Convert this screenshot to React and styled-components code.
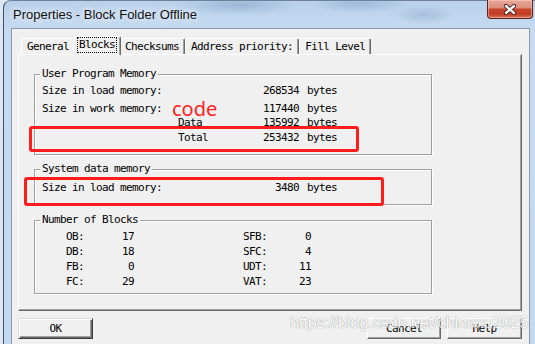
import styled, { createGlobalStyle } from 'styled-components';

const GlobalStyle = createGlobalStyle`
  html, body {
    margin: 0;
    padding: 0;
    overflow: hidden;
  }
  body {
    width: 535px;
    height: 344px;
    background: #dce7f3;
    font-family: "DejaVu Sans Mono", "Liberation Mono", monospace;
    color: #000;
  }
`;

const Page = styled.div`
  position: relative;
  width: 535px;
  height: 344px;
  overflow: hidden;
`;

const Window = styled.div`
  margin-left: 3px;
  width: 545px;
  height: 360px;
  box-sizing: border-box;
  border-left: 1px solid #3f4f61;
  border-top: 1px solid #6f8299;
  border-top-left-radius: 8px;
  padding-left: 7px;
  display: flex;
  flex-direction: column;
  background:
    radial-gradient(ellipse 60px 10px at 235px 4px, rgba(120, 150, 185, 0.45), transparent),
    radial-gradient(ellipse 50px 9px at 355px 3px, rgba(120, 150, 185, 0.4), transparent),
    radial-gradient(ellipse 30px 10px at 420px 14px, rgba(120, 150, 185, 0.35), transparent),
    linear-gradient(to bottom, #b9d1eb 0%, #c6dbf1 30px, #c3d9f0 100%);
`;

const TitleBar = styled.div`
  height: 27px;
  display: flex;
  align-items: flex-start;
  margin-left: -7px;
  padding-left: 9px;
`;

const TitleText = styled.span`
  font-family: "Liberation Sans", Arial, sans-serif;
  font-size: 13px;
  line-height: 27px;
  color: #111;
  text-shadow: 0 0 6px rgba(255, 255, 255, 0.9), 0 0 10px rgba(255, 255, 255, 0.7);
`;

const CloseButton = styled.div`
  margin-left: auto;
  margin-right: 15px;
  margin-top: -1px;
  width: 46px;
  height: 19px;
  box-sizing: border-box;
  border: 1px solid #5e2219;
  border-top: none;
  border-radius: 0 0 4px 4px;
  background: linear-gradient(
    to bottom,
    #e9a899 0%,
    #dc8e7d 42%,
    #c7452d 52%,
    #c23c24 78%,
    #d8735c 100%
  );
  box-shadow: inset 0 0 0 1px rgba(255, 220, 210, 0.45);
  display: flex;
  align-items: center;
  justify-content: center;
`;

const Client = styled.div`
  width: 519px;
  flex: 1;
  box-sizing: border-box;
  border: 1px solid #8a9aae;
  background: #f0f0f0;
  padding: 7px 7px 0 6px;
`;

const TabStrip = styled.div`
  display: flex;
  align-items: flex-end;
  height: 18px;
  padding-left: 3px;
  position: relative;
  z-index: 1;
`;

const Tab = styled.div`
  height: ${({ $active }) => ($active ? '19px' : '16px')};
  margin: ${({ $active }) => ($active ? '0 -2px -1px' : '0')};
  padding: 0 4px;
  box-sizing: border-box;
  border: 1px solid;
  border-color: #fff #696969 transparent #fff;
  border-bottom: none;
  border-radius: 2px 2px 0 0;
  box-shadow: inset -1px 0 0 #a0a0a0;
  background: #f0f0f0;
  position: relative;
  z-index: ${({ $active }) => ($active ? 2 : 1)};
  display: flex;
  align-items: ${({ $active }) => ($active ? 'flex-start' : 'center')};
  padding-top: ${({ $active }) => ($active ? '1px' : '0')};
  font-size: 11px;
  letter-spacing: -0.62px;
  white-space: nowrap;
`;

const TabLabel = styled.span`
  line-height: 14px;
  padding: 0 1px;
  outline: ${({ $focus }) => ($focus ? '1px dotted #000' : 'none')};
`;

const Panel = styled.div`
  height: 257px;
  box-sizing: border-box;
  border: 1px solid;
  border-color: #fff #696969 #696969 #fff;
  box-shadow: inset -1px -1px 0 #a0a0a0;
  padding: 19px 0 0 15px;
`;

const GroupBox = styled.div`
  position: relative;
  width: 398px;
  box-sizing: border-box;
  margin-top: ${({ $mt }) => $mt}px;
  padding: ${({ $pt }) => $pt}px 0 ${({ $pb }) => $pb}px 7px;
  border: 1px solid #a0a0a0;
  box-shadow: inset 1px 1px 0 #fff, 1px 1px 0 #fff;
  font-size: 11px;
  letter-spacing: -0.62px;
`;

const Legend = styled.span`
  position: absolute;
  top: -7px;
  left: 5px;
  padding: 0 2px;
  line-height: 12px;
  background: #f0f0f0;
  white-space: nowrap;
`;

const MemRow = styled.div`
  display: grid;
  grid-template-columns: 136px 60px 61px auto;
  height: 14px;
  line-height: 14px;
  margin-top: ${({ $mt }) => $mt || 0}px;
  white-space: nowrap;
`;

const Value = styled.span`
  text-align: right;
`;

const Unit = styled.span`
  padding-left: 8px;
`;

const BlockRow = styled.div`
  display: grid;
  grid-template-columns: 48px 20px 109px 48px 20px;
  padding-left: 24px;
  height: 14px;
  line-height: 14px;
  margin-top: ${({ $mt }) => $mt || 0}px;
  white-space: nowrap;
`;

const ButtonRow = styled.div`
  display: flex;
  justify-content: space-between;
  margin-top: 7px;
`;

const ButtonGroup = styled.div`
  display: flex;
  gap: 6px;
`;

const Button = styled.div`
  width: ${({ $w }) => $w}px;
  height: 21px;
  box-sizing: border-box;
  border: 1px solid;
  border-color: ${({ $default }) =>
    $default ? '#dcdcdc #3c3c3c #3c3c3c #dcdcdc' : '#fff #696969 #696969 #fff'};
  box-shadow: ${({ $default }) =>
    $default
      ? 'inset 1px 1px 0 #fff, inset -1px -1px 0 #696969, inset -2px -2px 0 #a0a0a0'
      : 'inset -1px -1px 0 #a0a0a0'};
  background: #f0f0f0;
  display: flex;
  align-items: center;
  justify-content: center;
  font-size: 11px;
  letter-spacing: -0.62px;
`;

const RedBox = styled.div`
  position: absolute;
  left: ${({ $x }) => $x}px;
  top: ${({ $y }) => $y}px;
  width: ${({ $w }) => $w}px;
  height: ${({ $h }) => $h}px;
  box-sizing: border-box;
  border: 3px solid #ff1c1c;
  border-radius: 3px;
  pointer-events: none;
`;

const CodeNote = styled.span`
  position: absolute;
  left: 172px;
  top: 99px;
  font-family: "Noto Sans", "Liberation Sans", sans-serif;
  font-size: 20px;
  line-height: 20px;
  color: #ff2323;
`;

const Watermark = styled.span`
  position: absolute;
  left: 290px;
  top: 315px;
  font-family: "Liberation Sans", Arial, sans-serif;
  font-size: 16px;
  line-height: 16px;
  color: #ffffff;
  opacity: 0.75;
  text-shadow: 0 0 1px #8c8c8c, 0 0 1px #8c8c8c;
  white-space: nowrap;
  pointer-events: none;
`;

const tabs = ['General', 'Blocks', 'Checksums', 'Address priority:', 'Fill Level'];

const memory = [
  { label: 'Size in load memory:', value: '268534', mt: 0 },
  { label: 'Size in work memory:', value: '117440', mt: 4 },
  { sub: 'Data', value: '135992', mt: 0 },
  { sub: 'Total', value: '253432', mt: 1 },
];

const blocks = [
  ['OB:', '17', 'SFB:', '0'],
  ['DB:', '18', 'SFC:', '4'],
  ['FB:', '0', 'UDT:', '11'],
  ['FC:', '29', 'VAT:', '23'],
];

function CloseGlyph() {
  return (
    <svg width="14" height="11" viewBox="0 0 14 11">
      <path d="M3 2 L11 9 M11 2 L3 9" stroke="#3a1510" strokeWidth="4.2" strokeLinecap="round" />
      <path d="M3 2 L11 9 M11 2 L3 9" stroke="#fff" strokeWidth="2.4" strokeLinecap="round" />
    </svg>
  );
}

export default function App() {
  return (
    <Page>
      <GlobalStyle />
      <Window>
        <TitleBar>
          <TitleText>Properties - Block Folder Offline</TitleText>
          <CloseButton>
            <CloseGlyph />
          </CloseButton>
        </TitleBar>
        <Client>
          <TabStrip>
            {tabs.map((t) => (
              <Tab key={t} $active={t === 'Blocks'}>
                <TabLabel $focus={t === 'Blocks'}>{t}</TabLabel>
              </Tab>
            ))}
          </TabStrip>
          <Panel>
            <GroupBox $mt={0} $pt={9} $pb={9}>
              <Legend>User Program Memory</Legend>
              {memory.map((m) => (
                <MemRow key={m.value} $mt={m.mt}>
                  <span>{m.label || ''}</span>
                  <span>{m.sub || ''}</span>
                  <Value>{m.value}</Value>
                  <Unit>bytes</Unit>
                </MemRow>
              ))}
            </GroupBox>
            <GroupBox $mt={14} $pt={11} $pb={9}>
              <Legend>System data memory</Legend>
              <MemRow>
                <span>Size in load memory:</span>
                <span />
                <Value>3480</Value>
                <Unit>bytes</Unit>
              </MemRow>
            </GroupBox>
            <GroupBox $mt={15} $pt={9} $pb={4}>
              <Legend>Number of Blocks</Legend>
              {blocks.map((b, i) => (
                <BlockRow key={b[0]} $mt={i === 0 ? 0 : 1}>
                  <span>{b[0]}</span>
                  <Value>{b[1]}</Value>
                  <span />
                  <span>{b[2]}</span>
                  <Value>{b[3]}</Value>
                </BlockRow>
              ))}
            </GroupBox>
          </Panel>
          <ButtonRow>
            <Button $w={75} $default>OK</Button>
            <ButtonGroup>
              <Button $w={74}>Cancel</Button>
              <Button $w={75}>Help</Button>
            </ButtonGroup>
          </ButtonRow>
        </Client>
      </Window>
      <CodeNote>code</CodeNote>
      <RedBox $x={29} $y={126} $w={330} $h={26} />
      <RedBox $x={24} $y={177} $w={360} $h={29} />
      <Watermark>https://blog.csdn.net/chinaxu2025</Watermark>
    </Page>
  );
}
